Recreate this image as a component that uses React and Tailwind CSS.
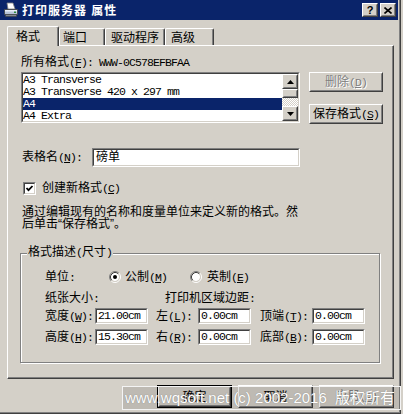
import React from 'react';

const CJK = "font-['Liberation_Sans','Noto_Sans_CJK_SC',sans-serif]";
const MONO = "font-['Liberation_Mono',monospace] text-[11.5px] tracking-[-0.9px]";

const FORMS = ['A3 Transverse', 'A3 Transverse 420 x 297 mm', 'A4', 'A4 Extra'];

function Asc({ children }) {
  return <span className={MONO}>{children}</span>;
}

// hotkey in brackets, letter underlined
function Key({ k, colon }) {
  return (
    <span className={MONO}>
      (<span className="underline underline-offset-[1px]">{k}</span>){colon ? ':' : ''}
    </span>
  );
}

function Raised({ className = '', children }) {
  return (
    <div className={`border border-t-white border-l-white border-r-[#404040] border-b-[#404040] bg-[#d4d0c8] ${className}`}>
      <div className="flex h-full w-full items-center justify-center border border-t-[#d4d0c8] border-l-[#d4d0c8] border-r-[#808080] border-b-[#808080]">
        {children}
      </div>
    </div>
  );
}

function Sunken({ className = '', children }) {
  return (
    <div className={`border border-t-[#808080] border-l-[#808080] border-r-white border-b-white ${className}`}>
      <div className="h-full w-full overflow-hidden border border-t-[#404040] border-l-[#404040] border-r-[#d4d0c8] border-b-[#d4d0c8] bg-white">
        {children}
      </div>
    </div>
  );
}

function Button({ className = '', disabled, def, children }) {
  const label = (
    <span className={`whitespace-nowrap leading-[12px] ${disabled ? 'text-[#808080] [text-shadow:1px_1px_0_#fff]' : ''}`}>
      {children}
    </span>
  );
  if (def) {
    return (
      <div className={`border border-black ${className}`}>
        <Raised className="h-full w-full">{label}</Raised>
      </div>
    );
  }
  return <Raised className={className}>{label}</Raised>;
}

function Field({ children }) {
  return (
    <Sunken className="h-[16px] w-[53px]">
      <div className={`pl-[1px] leading-[12px] ${MONO}`}>{children}</div>
    </Sunken>
  );
}

function Radio({ on }) {
  return (
    <svg width="12" height="12" viewBox="0 0 12 12">
      <circle cx="6" cy="6" r="4" fill="#fff" />
      <path d="M2.11 9.89A5.5 5.5 0 0 1 9.89 2.11" fill="none" stroke="#808080" />
      <path d="M9.89 2.11A5.5 5.5 0 0 1 2.11 9.89" fill="none" stroke="#fff" />
      <path d="M2.82 9.18A4.5 4.5 0 0 1 9.18 2.82" fill="none" stroke="#404040" />
      <path d="M9.18 2.82A4.5 4.5 0 0 1 2.82 9.18" fill="none" stroke="#d4d0c8" />
      {on && <circle cx="6" cy="6" r="2" fill="#000" />}
    </svg>
  );
}

function PrinterIcon() {
  return (
    <svg width="16" height="16" viewBox="0 0 16 16">
      <polygon points="4,1 10,1 12,7 5,7" fill="#fff" stroke="#808080" strokeWidth="0.8" />
      <path d="M1.5 7.5h13v5h-13z" fill="#b8c4d8" stroke="#404040" strokeWidth="0.8" />
      <path d="M2 8h12v1.5H2z" fill="#e8eef8" />
      <path d="M2.5 12.5h11v2h-11z" fill="#808890" stroke="#404040" strokeWidth="0.6" />
      <rect x="11" y="9.5" width="2" height="1.5" fill="#2a8a3a" />
    </svg>
  );
}

function TitleBar() {
  return (
    <div className="flex h-[20px] w-[398px] items-center bg-[#0a246a] pl-[3px] pr-[2px]">
      <PrinterIcon />
      <span className="ml-[3px] whitespace-nowrap pt-[1px] text-[12px] font-bold tracking-[1px] text-white">
        打印服务器 属性
      </span>
      <div className="ml-auto flex gap-[2px]">
        <Raised className="h-[14px] w-[16px]">
          <span className="font-['Liberation_Sans',sans-serif] text-[11px] font-bold leading-[10px] text-black">?</span>
        </Raised>
        <Raised className="h-[14px] w-[16px]">
          <svg width="8" height="7" viewBox="0 0 8 7">
            <path d="M0.5 0.5L7.5 6.5M7.5 0.5L0.5 6.5" stroke="#000" strokeWidth="1.6" />
          </svg>
        </Raised>
      </div>
    </div>
  );
}

function Tab({ className = '', children }) {
  return (
    <div className={`flex h-[17px] items-center whitespace-nowrap rounded-t-[2px] border-t border-l border-r border-t-white border-l-white border-r-[#404040] pt-[2px] shadow-[inset_-1px_0_0_#808080] ${className}`}>
      {children}
    </div>
  );
}

function Scrollbar() {
  return (
    <div className="flex h-full w-[16px] shrink-0 flex-col">
      <Raised className="h-[15px] w-[16px]">
        <svg width="7" height="4" viewBox="0 0 7 4"><polygon points="3.5,0 7,4 0,4" fill="#000" /></svg>
      </Raised>
      <Raised className="h-[9px] w-[16px]" />
      <div className="flex-1 bg-[repeating-conic-gradient(#d4d0c8_0%_25%,#ffffff_0%_50%)] bg-[length:2px_2px]" />
      <Raised className="h-[15px] w-[16px]">
        <svg width="7" height="4" viewBox="0 0 7 4"><polygon points="0,0 7,0 3.5,4" fill="#000" /></svg>
      </Raised>
    </div>
  );
}

function Panel() {
  return (
    <div className="ml-[7px] h-[334px] w-[387px] border border-t-white border-l-white border-r-[#404040] border-b-[#404040] shadow-[inset_-1px_-1px_0_#808080]">
      <div className="ml-[13px] mt-[10px] h-[12px] whitespace-nowrap">
        所有格式<Key k="F" colon /><Asc>{' WWW-0C578EFBFAA'}</Asc>
      </div>

      <div className="mt-[4px] flex">
        <Sunken className="ml-[13px] h-[51px] w-[279px]">
          <div className="flex h-full">
            <div className="flex-1">
              {FORMS.map((f, i) => (
                <div
                  key={f}
                  className={`h-[12px] whitespace-nowrap leading-[12px] ${MONO} ${i === 2 ? 'bg-[#0a246a] text-white' : ''}`}
                >
                  {f}
                </div>
              ))}
            </div>
            <Scrollbar />
          </div>
        </Sunken>
        <div className="ml-[9px] flex flex-col gap-[12px]">
          <Button className="h-[20px] w-[74px]" disabled>删除<Key k="D" /></Button>
          <Button className="h-[20px] w-[74px]">保存格式<Key k="S" /></Button>
        </div>
      </div>

      <div className="mt-[24px] flex h-[19px] items-center">
        <span className="ml-[14px] w-[70px] whitespace-nowrap">表格名<Key k="N" colon /></span>
        <Sunken className="h-[19px] w-[208px]">
          <div className="pl-[2px] pt-[1px] leading-[13px]">磅单</div>
        </Sunken>
      </div>

      <div className="mt-[15px] flex h-[13px] items-center">
        <Sunken className="ml-[15px] h-[13px] w-[13px]">
          <svg width="9" height="9" viewBox="0 0 9 9">
            <polyline points="1.5,4 3.5,6.2 7.5,2" fill="none" stroke="#000" strokeWidth="1.8" />
          </svg>
        </Sunken>
        <span className="ml-[6px] whitespace-nowrap">创建新格式<Key k="C" /></span>
      </div>

      <div className="ml-[14px] mt-[11px] whitespace-nowrap leading-[12px]">
        通过编辑现有的名称和度量单位来定义新的格式。然
        <br />
        后单击“保存格式”。
      </div>

      <div className="relative ml-[12px] mt-[23px] h-[110px] w-[360px] border border-[#808080] shadow-[inset_1px_1px_0_#fff,1px_1px_0_#fff]">
        <span className="absolute -top-[8px] left-[6px] whitespace-nowrap bg-[#d4d0c8] px-[1px] leading-[12px]">
          格式描述<Asc>(</Asc>尺寸<Asc>)</Asc>
        </span>

        <div className="ml-[24px] mt-[17px] flex h-[12px] items-center whitespace-nowrap">
          <span className="w-[64px]">单位<Asc>:</Asc></span>
          <div className="flex w-[81px] items-center">
            <Radio on />
            <span className="ml-[4px]">公制<Key k="M" /></span>
          </div>
          <div className="flex items-center">
            <Radio />
            <span className="ml-[5px]">英制<Key k="E" /></span>
          </div>
        </div>

        <div className="ml-[24px] mt-[9px] flex h-[12px] items-center whitespace-nowrap">
          <span className="w-[120px]">纸张大小<Asc>:</Asc></span>
          <span>打印机区域边距<Asc>:</Asc></span>
        </div>

        <div className="ml-[24px] mt-[4px] flex h-[16px] items-center whitespace-nowrap">
          <span className="w-[50px]">宽度<Key k="W" colon /></span>
          <Field>21.00cm</Field>
          <span className="ml-[8px] w-[42px]">左<Key k="L" colon /></span>
          <Field>0.00cm</Field>
          <span className="ml-[9px] w-[52px]">顶端<Key k="T" colon /></span>
          <Field>0.00cm</Field>
        </div>

        <div className="ml-[24px] mt-[5px] flex h-[16px] items-center whitespace-nowrap">
          <span className="w-[50px]">高度<Key k="H" colon /></span>
          <Field>15.30cm</Field>
          <span className="ml-[8px] w-[42px]">右<Key k="R" colon /></span>
          <Field>0.00cm</Field>
          <span className="ml-[9px] w-[52px]">底部<Key k="B" colon /></span>
          <Field>0.00cm</Field>
        </div>
      </div>
    </div>
  );
}

export default function App() {
  return (
    <div className={`relative h-[414px] w-[403px] overflow-hidden bg-[#d4d0c8] text-[12px] leading-[12px] text-black ${CJK}`}>
      <div className="flex h-[414px] w-[401px] flex-col border-r border-b border-r-[#404040] border-b-[#404040] shadow-[inset_-1px_-1px_0_#808080]">
        <TitleBar />

        <div className="mt-[6px] flex h-[19px] items-end pl-[7px]">
          <div className="relative z-10 -mb-px flex h-[20px] w-[52px] items-center rounded-t-[2px] border-t border-l border-r border-t-white border-l-white border-r-[#404040] bg-[#d4d0c8] pl-[8px] pt-[1px] shadow-[inset_-1px_0_0_#808080]">
            格式
          </div>
          <Tab className="w-[46px] pl-[3px]">端口</Tab>
          <Tab className="w-[60px] pl-[5px]">驱动程序</Tab>
          <Tab className="w-[49px] pl-[5px]">高级</Tab>
        </div>

        <Panel />

        <div className="ml-[157px] mt-[6px] flex gap-[6px]">
          <Button className="h-[23px] w-[75px]" def>确定</Button>
          <Button className="h-[23px] w-[75px]">取消</Button>
          <Button className="h-[23px] w-[75px]" disabled>应用<Key k="A" /></Button>
        </div>
      </div>

      <div className="absolute left-[122px] top-[386px] flex h-[24px] w-[279px] items-center border border-[#f4f4f4] bg-black/10 pl-[2px]">
        <span className="whitespace-pre text-[15px] leading-[16px] text-white [text-shadow:0_0_1px_#777]">
          www.wqsoft.net (c) 2002-2016  版权所有
        </span>
      </div>
    </div>
  );
}
